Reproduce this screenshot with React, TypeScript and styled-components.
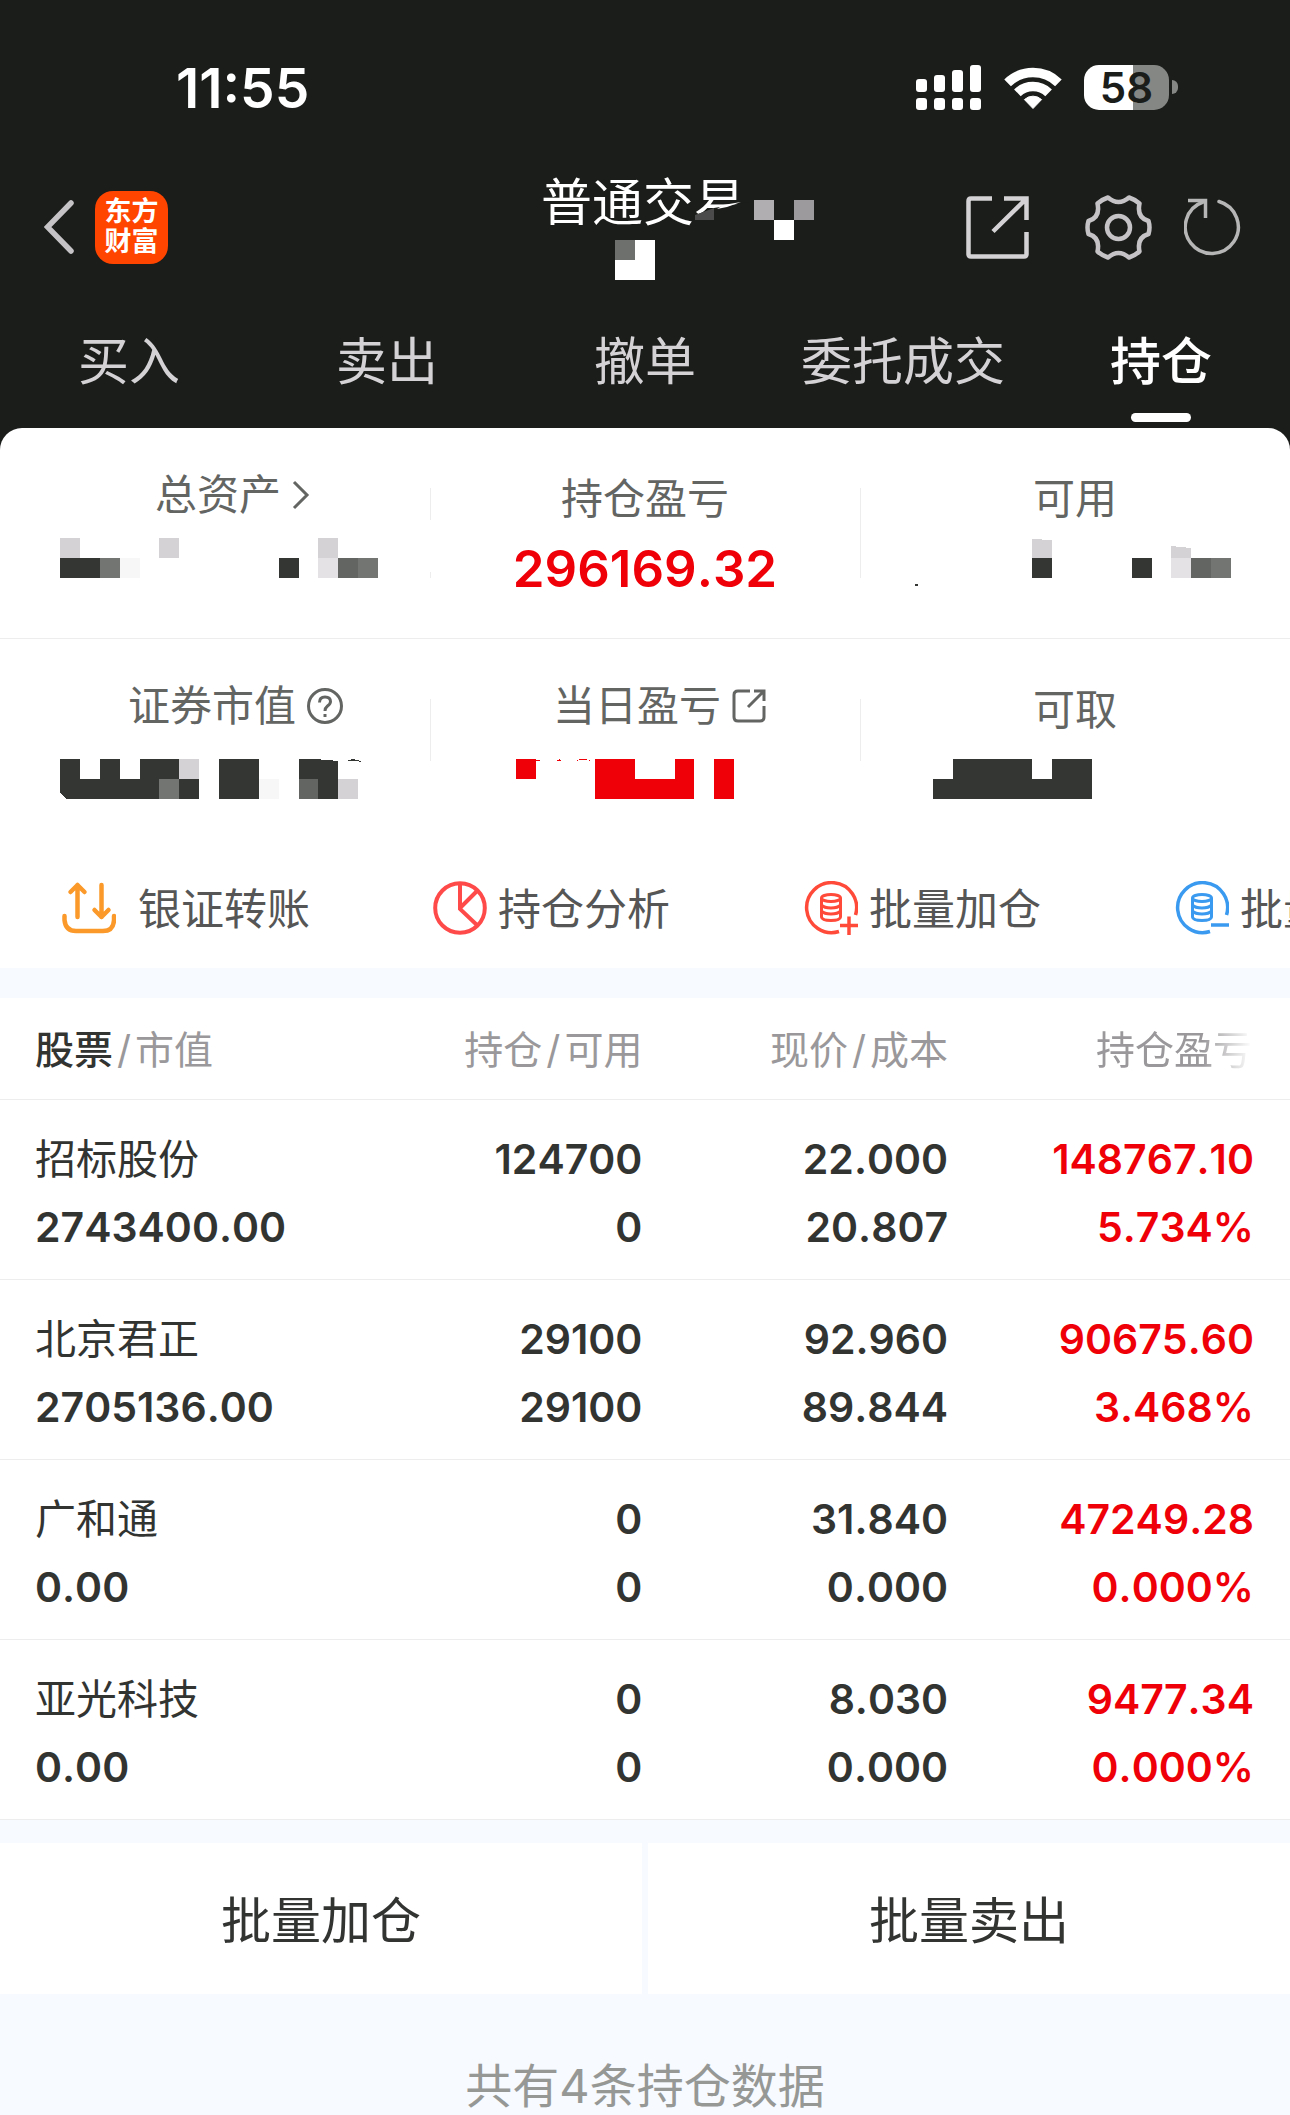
import React from "react";
import styled, { createGlobalStyle } from "styled-components";

const colors = {
  night: "#1a1d1a",
  page: "#f7faff",
  ink: "#323432",
  label: "#636563",
  muted: "#9a989a",
  line: "#ededed",
  red: "#ef0009",
  silver: "#d5d2d5",
};

const GlobalStyle = createGlobalStyle`
  * { box-sizing: border-box; }
  body {
    margin: 0;
    background: ${colors.page};
    font-family: Inter, "Noto Sans CJK SC", sans-serif;
    font-kerning: none;
    color: ${colors.ink};
  }
  button {
    margin: 0;
    padding: 0;
    border: 0;
    background: none;
    font: inherit;
    color: inherit;
    cursor: pointer;
  }
  svg { display: block; flex: none; }
`;

const Page = styled.div`
  overflow: hidden;
`;

/* ---------- dark header ---------- */

const Header = styled.header`
  background: ${colors.night};
  color: #fff;
  padding-bottom: 22px;
`;

const StatusBar = styled.div`
  display: flex;
  align-items: center;
  justify-content: space-between;
  height: 174px;
  padding: 0 112px 0 176px;
`;

const Clock = styled.time`
  padding-top: 2px;
  font-size: 55px;
  font-weight: 600;
  line-height: 60px;
`;

const StatusIcons = styled.div`
  display: flex;
  align-items: center;
  gap: 22px;
`;

const Battery = styled.div`
  display: flex;
  align-items: center;
  gap: 3px;
`;

const BatteryBody = styled.span`
  width: 85px;
  height: 45px;
  border-radius: 15px;
  background: linear-gradient(90deg, #fff 58%, #858785 58%);
  color: ${colors.night};
  font-size: 42px;
  font-weight: 600;
  line-height: 45px;
  text-align: center;
`;

const BatteryCap = styled.span`
  width: 6px;
  height: 14px;
  border-radius: 0 6px 6px 0;
  background: #858785;
`;

const NavBar = styled.nav`
  display: grid;
  grid-template-columns: 1fr auto 1fr;
  align-items: center;
  height: 106px;
  padding: 0 48px 0 44px;
`;

const NavLeft = styled.div`
  display: flex;
  align-items: center;
  gap: 21px;
`;

const NavRight = styled.div`
  display: grid;
  grid-template-columns: 87px 67px 58px;
  align-items: center;
  justify-content: end;
  column-gap: 32px;
`;

const Logo = styled.span`
  display: grid;
  place-content: center;
  width: 73px;
  height: 73px;
  border-radius: 18px;
  background: #ff4500;
  font-size: 27px;
  font-weight: 700;
  line-height: 30px;
  text-align: center;
`;

const TitleBlock = styled.div`
  position: relative;
  height: 106px;
`;

const Title = styled.h1`
  margin: 0;
  font-size: 51px;
  font-weight: 400;
  line-height: 58px;
`;

const TitleCover = styled.svg`
  position: absolute;
  top: 0;
  left: 0;
`;

const Tabs = styled.div`
  display: grid;
  grid-template-columns: repeat(5, 1fr);
`;

const Tab = styled.button<{ $active?: boolean }>`
  display: flex;
  flex-direction: column;
  align-items: center;
  gap: 19px;
  padding: 50px 0 6px;
  font-size: 51px;
  font-weight: ${(p) => (p.$active ? 500 : 400)};
  line-height: 64px;
  color: ${(p) => (p.$active ? "#fff" : colors.silver)};

  &::after {
    content: "";
    width: 60px;
    height: 9px;
    border-radius: 5px;
    background: ${(p) => (p.$active ? "#fff" : "transparent")};
  }
`;

/* ---------- account summary ---------- */

const Card = styled.section`
  margin-top: -22px;
  border-radius: 22px 22px 0 0;
  background: #fff;
`;

const SummaryRow = styled.div`
  display: grid;
  grid-template-columns: repeat(3, 1fr);

  &:first-child {
    padding-bottom: 30px;
    border-bottom: 1px solid ${colors.line};
  }
`;

const SummaryCell = styled.div<{ $rule?: string }>`
  padding-top: 40px;
  background: ${(p) => p.$rule || "none"} no-repeat 0 0 / 1px 100%;
`;

const LabelBox = styled.div`
  display: flex;
  flex-direction: column;
  height: 60px;
  font-size: 42px;
  line-height: 62px;
  color: ${colors.label};
  text-align: center;
`;

const LabelButton = styled.button<{ $lead?: number; $trail?: number }>`
  display: grid;
  grid-template-columns: 1fr auto 1fr;
  align-items: center;
  column-gap: 11px;
  padding: 0 ${(p) => p.$trail || 0}px 0 ${(p) => p.$lead || 0}px;
  line-height: 54px;

  & > span { grid-column: 2; }
`;

const Value = styled.div<{ $indent?: number }>`
  display: flex;
  align-items: center;
  justify-content: ${(p) => (p.$indent ? "flex-start" : "center")};
  height: 80px;
  padding-left: ${(p) => p.$indent || 0}px;
  font-size: 51px;
  font-weight: 600;
  color: ${colors.red};
`;

const Actions = styled.div`
  display: flex;
  height: 149px;
  padding: 28px 0 0 62px;
  overflow: hidden;
`;

const Action = styled.button<{ $wide?: boolean }>`
  display: flex;
  flex: none;
  align-items: center;
  gap: ${(p) => (p.$wide ? 22 : 11)}px;
  width: 371px;
  font-size: 43px;
  color: #555655;
  white-space: nowrap;

  & > span { padding-bottom: 4px; }
`;

/* ---------- holdings ---------- */

const Table = styled.table`
  width: 100%;
  margin-top: 30px;
  table-layout: fixed;
  border-collapse: separate;
  border-spacing: 0;
  background: #fff;
`;

const HeadCell = styled.th<{ $width: string }>`
  width: ${(p) => p.$width};
  height: 102px;
  padding: 0 0 4px;
  border-bottom: 1px solid ${colors.line};
  font-size: 39px;
  font-weight: 400;
  color: ${colors.muted};
  text-align: right;
  white-space: nowrap;

  &:first-child { padding-left: 35px; text-align: left; }
  &:last-child { padding-right: 38px; }
  & b { font-weight: 500; color: ${colors.ink}; }
`;

const Slash = styled.span`
  margin: 0 4px;
`;

const Faded = styled.span`
  mask-image: linear-gradient(90deg, #000 68%, transparent 100%);
`;

const Cell = styled.td<{ $red?: boolean }>`
  padding: 25px 0 18px;
  border-bottom: 1px solid ${colors.line};
  font-size: 41px;
  line-height: 68px;
  color: ${(p) => (p.$red ? colors.red : colors.ink)};
  text-align: right;

  &:first-child { padding-left: 35px; text-align: left; }
  &:last-child { padding-right: 36px; }
`;

const Line = styled.div<{ $name?: boolean }>`
  height: 68px;
  font-weight: ${(p) => (p.$name ? 400 : 600)};
`;

const BottomBar = styled.div`
  display: grid;
  grid-template-columns: 1fr 1fr;
  gap: 6px;
  margin-top: 23px;
`;

const BottomButton = styled.button`
  height: 151px;
  padding-bottom: 3px;
  background: #fff;
  font-size: 50px;
`;

const Footnote = styled.p`
  margin: 0;
  padding-top: 62px;
  font-size: 47px;
  line-height: 59px;
  color: #969896;
  text-align: center;
`;

/* ---------- censored values ---------- */

const tones: Record<string, string> = {
  d: "#343633",
  g: "#636562",
  m: "#727571",
  l: "#d5d2d5",
  p: "#e5e2e5",
  w: "#f7f7f7",
  r: colors.red,
};

function Mosaic({ rows, children }: { rows: string[]; children?: React.ReactNode }) {
  const cols = Math.max(...rows.map((r) => r.length));
  return (
    <svg
      width={Math.round(cols * 19.85)}
      height={rows.length * 20}
      viewBox={`0 0 ${cols * 20} ${rows.length * 20}`}
      preserveAspectRatio="none"
      shapeRendering="crispEdges"
      overflow="visible"
      aria-label="已隐藏"
    >
      {rows.flatMap((row, y) =>
        row.split("").map((c, x) =>
          tones[c] ? <rect key={`${x}-${y}`} x={x * 20} y={y * 20} width="20" height="20" fill={tones[c]} /> : null
        )
      )}
      {children}
    </svg>
  );
}

/* ---------- icons ---------- */

const SignalIcon = () => (
  <svg width="66" height="45" fill="#fff">
    {[14, 10, 5, 0].map((top, i) => (
      <g key={i}>
        <rect x={i * 18} y={top} width="11" height={27 - top} rx="3" />
        <rect x={i * 18} y="33" width="11" height="12" rx="3" />
      </g>
    ))}
  </svg>
);

const WifiIcon = () => (
  <svg width="58" height="43" viewBox="0 0 58 43">
    <g fill="none" stroke="#fff" strokeWidth="9.5">
      <path d="M3.6 16.8A36.5 36.5 0 0 1 54.4 16.8" />
      <path d="M13.4 26.8A22.5 22.5 0 0 1 44.6 26.8" />
    </g>
    <path d="M29 42.5L20.4 33.6A12.5 12.5 0 0 1 37.6 33.6Z" fill="#fff" stroke="#fff" strokeLinejoin="round" />
  </svg>
);

const BackIcon = () => (
  <svg width="30" height="54" fill="none" stroke="#c6c3c6" strokeWidth="5.5" strokeLinecap="round">
    <path d="M27 3L3.500 27L27 51" />
  </svg>
);

const ShareIcon = () => (
  <svg width="63" height="63" fill="none" stroke={colors.silver} strokeWidth="4.500">
    <path d="M26 2.500H5Q2.500 2.500 2.500 5V58Q2.500 60.500 5 60.500H58Q60.500 60.500 60.500 58V36" />
    <path d="M38 2.500H60.500V24M60 3L27 35.500" />
  </svg>
);

const GearIcon = () => (
  <svg width="67" height="65" viewBox="0 0 67 65" fill="none" stroke="#c6c3c6" strokeWidth="4.500" strokeLinejoin="round">
    <path d="M23 2.500Q33.500 11.500 44 2.500Q50 4.500 54.500 8.500Q51.500 22.500 63.500 26Q65.500 32.500 63.500 39Q51.500 42.500 54.500 56.500Q50 60.500 44 62.500Q33.500 53.500 23 62.500Q17 60.500 12.500 56.500Q15.500 42.500 3.500 39Q1.500 32.500 3.500 26Q15.500 22.500 12.500 8.500Q17 4.500 23 2.500Z" />
    <circle cx="33.500" cy="32.500" r="11.500" />
  </svg>
);

const RefreshIcon = () => (
  <svg width="58" height="58" viewBox="0 0 58 58" fill="none" stroke="#b5b6b5" strokeWidth="3.500">
    <path d="M35 3.500A26.500 26.500 0 1 1 19 4" strokeLinecap="round" />
    <path d="M4 2.500H21.500V20" />
  </svg>
);

const ChevronIcon = () => (
  <svg width="18" height="30" fill="none" stroke={colors.label} strokeWidth="3">
    <path d="M2 2L15 15L2 28" />
  </svg>
);

const HelpIcon = () => (
  <svg width="36" height="36" fill="none" stroke={colors.label} strokeWidth="3">
    <circle cx="18" cy="18" r="16.500" />
    <path d="M12.500 14.500Q12.500 9 18 9Q23.500 9 23.500 13.500Q23.500 16 20.500 18Q18 20 18 23" />
    <path d="M18 26V29" />
  </svg>
);

const OpenIcon = () => (
  <svg width="34" height="34" fill="none" stroke={colors.label} strokeWidth="3">
    <path d="M18 2H6Q2 2 2 6V28Q2 32 6 32H28Q32 32 32 28V17" />
    <path d="M22 2H32V12M32 2L16 18" />
  </svg>
);

const TransferIcon = () => (
  <svg width="54" height="54" fill="none" stroke="#fb9a2a" strokeWidth="4.500" strokeLinecap="round" strokeLinejoin="round">
    <path d="M15.500 36V4M8.500 11L15.500 4L22.500 11" />
    <path d="M39.500 4V36M32.500 29L39.500 36L46.500 29" />
    <path d="M2.500 35V39Q3.500 50 14 50H41Q51.500 50 52 39V35" />
  </svg>
);

const PieIcon = () => (
  <svg width="54" height="54" fill="none" stroke="#ff4a4a" strokeWidth="4">
    <circle cx="27" cy="27" r="24.800" />
    <path d="M27 2V28L45 45M27 27L44 10" />
  </svg>
);

const StackIcon = ({ color, plus }: { color: string; plus?: boolean }) => (
  <svg width="54" height="54" fill="none" stroke={color} strokeWidth="3.500">
    <path d="M51.500 34A25 25 0 1 0 35 50.500" />
    <g strokeWidth="3">
      <ellipse cx="27" cy="17" rx="9.500" ry="3.500" />
      <path d="M17.500 17V36Q18 39.500 27 39.500Q36 39.500 36.500 36V17M17.500 24Q20 27 27 27T36.500 24M17.500 30Q20 33 27 33T36.500 30" />
    </g>
    <path d={plus ? "M36 44.500H54M45 35.500V54" : "M36 44H54"} />
  </svg>
);

/* ---------- data ---------- */

const tabs = ["买入", "卖出", "撤单", "委托成交", "持仓"];

const holdings = [
  ["招标股份", "2743400.00", "124700", "0", "22.000", "20.807", "148767.10", "5.734%"],
  ["北京君正", "2705136.00", "29100", "29100", "92.960", "89.844", "90675.60", "3.468%"],
  ["广和通", "0.00", "0", "0", "31.840", "0.000", "47249.28", "0.000%"],
  ["亚光科技", "0.00", "0", "0", "8.030", "0.000", "9477.34", "0.000%"],
];

const rule = (from: number, to: number) =>
  `linear-gradient(transparent ${from}px, ${colors.line} ${from}px ${to}px, transparent ${to}px)`;

const brokenRule = `linear-gradient(transparent 60px, ${colors.line} 60px 92px, transparent 92px 144px, ${colors.line} 144px 150px, transparent 150px)`;

export default function App() {
  return (
    <Page>
      <GlobalStyle />
      <Header>
        <StatusBar>
          <Clock>11:55</Clock>
          <StatusIcons>
            <SignalIcon />
            <WifiIcon />
            <Battery>
              <BatteryBody>58</BatteryBody>
              <BatteryCap />
            </Battery>
          </StatusIcons>
        </StatusBar>
        <NavBar>
          <NavLeft>
            <button aria-label="返回"><BackIcon /></button>
            <Logo>东方<br />财富</Logo>
          </NavLeft>
          <TitleBlock>
            <Title>普通交易</Title>
            <TitleCover width="280" height="106" viewBox="-2 0 280 106" aria-hidden="true">
              <path d="M150 42L171 34L206 28V62H150Z" fill={colors.night} />
              <path d="M152 41L171 34V46H152Z" fill="#4a4b4a" />
              <path d="M174 35L180 31L198 28L184 33Z" fill="#fff" />
              <path d="M211 26H231V46H211Z" fill="#b0aeb1" />
              <path d="M251 26H271V46H251Z" fill="#9d9a9d" />
              <path d="M231 46H251V66H231ZM72 66H112V106H72Z" fill="#fff" />
              <path d="M72 66H92V86H72Z" fill="#6e706d" />
            </TitleCover>
          </TitleBlock>
          <NavRight>
            <button aria-label="分享"><ShareIcon /></button>
            <button aria-label="设置"><GearIcon /></button>
            <button aria-label="刷新"><RefreshIcon /></button>
          </NavRight>
        </NavBar>
        <Tabs>
          {tabs.map((t) => (
            <Tab key={t} $active={t === "持仓"}>{t}</Tab>
          ))}
        </Tabs>
      </Header>

      <Card>
        <SummaryRow>
          <SummaryCell>
            <LabelBox>
              <LabelButton $lead={6}><span>总资产</span><ChevronIcon /></LabelButton>
            </LabelBox>
            <Value $indent={60}>
              <Mosaic rows={["l....l.......l..", "ddmw.......d.pgm", ""]} />
            </Value>
          </SummaryCell>
          <SummaryCell $rule={brokenRule}>
            <LabelBox>持仓盈亏</LabelBox>
            <Value>296169.32</Value>
          </SummaryCell>
          <SummaryCell $rule={rule(60, 150)}>
            <LabelBox>可用</LabelBox>
            <Value $indent={73}>
              <Mosaic rows={[".....l.........", ".....d....d.pgm", ""]}>
                <path d="M100 0H120V2L100 1Z" fill="#fff" />
                <path d="M240 8L260 10V20H240Z" fill={tones.l} />
                <path d="M-18 46H-15V48H-18Z" fill={tones.d} />
              </Mosaic>
            </Value>
          </SummaryCell>
        </SummaryRow>
        <SummaryRow>
          <SummaryCell>
            <LabelBox>
              <LabelButton $trail={6}><span>证券市值</span><HelpIcon /></LabelButton>
            </LabelBox>
            <Value $indent={60}>
              <Mosaic rows={["d.d.ddl.dd..dd..", "dddddmd.ddw.gdl."]}>
                <path d="M0 34V40H7Z" fill="#fff" />
                <path d="M247 0H280V2Q262 0 247 0Z" fill="#fff" />
                <path d="M288 2Q296 -2 304 3Q296 1 288 2Z" fill={tones.d} />
              </Mosaic>
            </Value>
          </SummaryCell>
          <SummaryCell $rule={rule(60, 122)}>
            <LabelBox>
              <LabelButton $trail={16}><span>当日盈亏</span><OpenIcon /></LabelButton>
            </LabelBox>
            <Value $indent={86}>
              <Mosaic rows={["r...rr..r.r", "....rrrrr.r"]}>
                <path d="M12 1Q18 0 24 1V2H12ZM40 2L44 0L46 2ZM60 2Q68 -2 76 2Q68 0 60 2Z" fill={colors.red} />
              </Mosaic>
            </Value>
          </SummaryCell>
          <SummaryCell $rule={rule(60, 122)}>
            <LabelBox>可取</LabelBox>
            <Value $indent={73}>
              <Mosaic rows={[".dddd.dd", "dddddddd"]} />
            </Value>
          </SummaryCell>
        </SummaryRow>
        <Actions>
          <Action $wide><TransferIcon /><span>银证转账</span></Action>
          <Action><PieIcon /><span>持仓分析</span></Action>
          <Action><StackIcon color="#ff4a3a" plus /><span>批量加仓</span></Action>
          <Action><StackIcon color="#3a9aef" /><span>批量卖出</span></Action>
        </Actions>
      </Card>

      <Table>
        <thead>
          <tr>
            <HeadCell scope="col" $width="26.1%"><b>股票</b><Slash>/</Slash>市值</HeadCell>
            <HeadCell scope="col" $width="23.7%">持仓<Slash>/</Slash>可用</HeadCell>
            <HeadCell scope="col" $width="23.7%">现价<Slash>/</Slash>成本</HeadCell>
            <HeadCell scope="col" $width="26.5%"><Faded>持仓盈亏</Faded></HeadCell>
          </tr>
        </thead>
        <tbody>
          {holdings.map(([name, worth, held, free, price, cost, gain, rate]) => (
            <tr key={name}>
              <Cell><Line $name>{name}</Line><Line>{worth}</Line></Cell>
              <Cell><Line>{held}</Line><Line>{free}</Line></Cell>
              <Cell><Line>{price}</Line><Line>{cost}</Line></Cell>
              <Cell $red><Line>{gain}</Line><Line>{rate}</Line></Cell>
            </tr>
          ))}
        </tbody>
      </Table>

      <BottomBar>
        <BottomButton>批量加仓</BottomButton>
        <BottomButton>批量卖出</BottomButton>
      </BottomBar>
      <Footnote>共有4条持仓数据</Footnote>
    </Page>
  );
}
